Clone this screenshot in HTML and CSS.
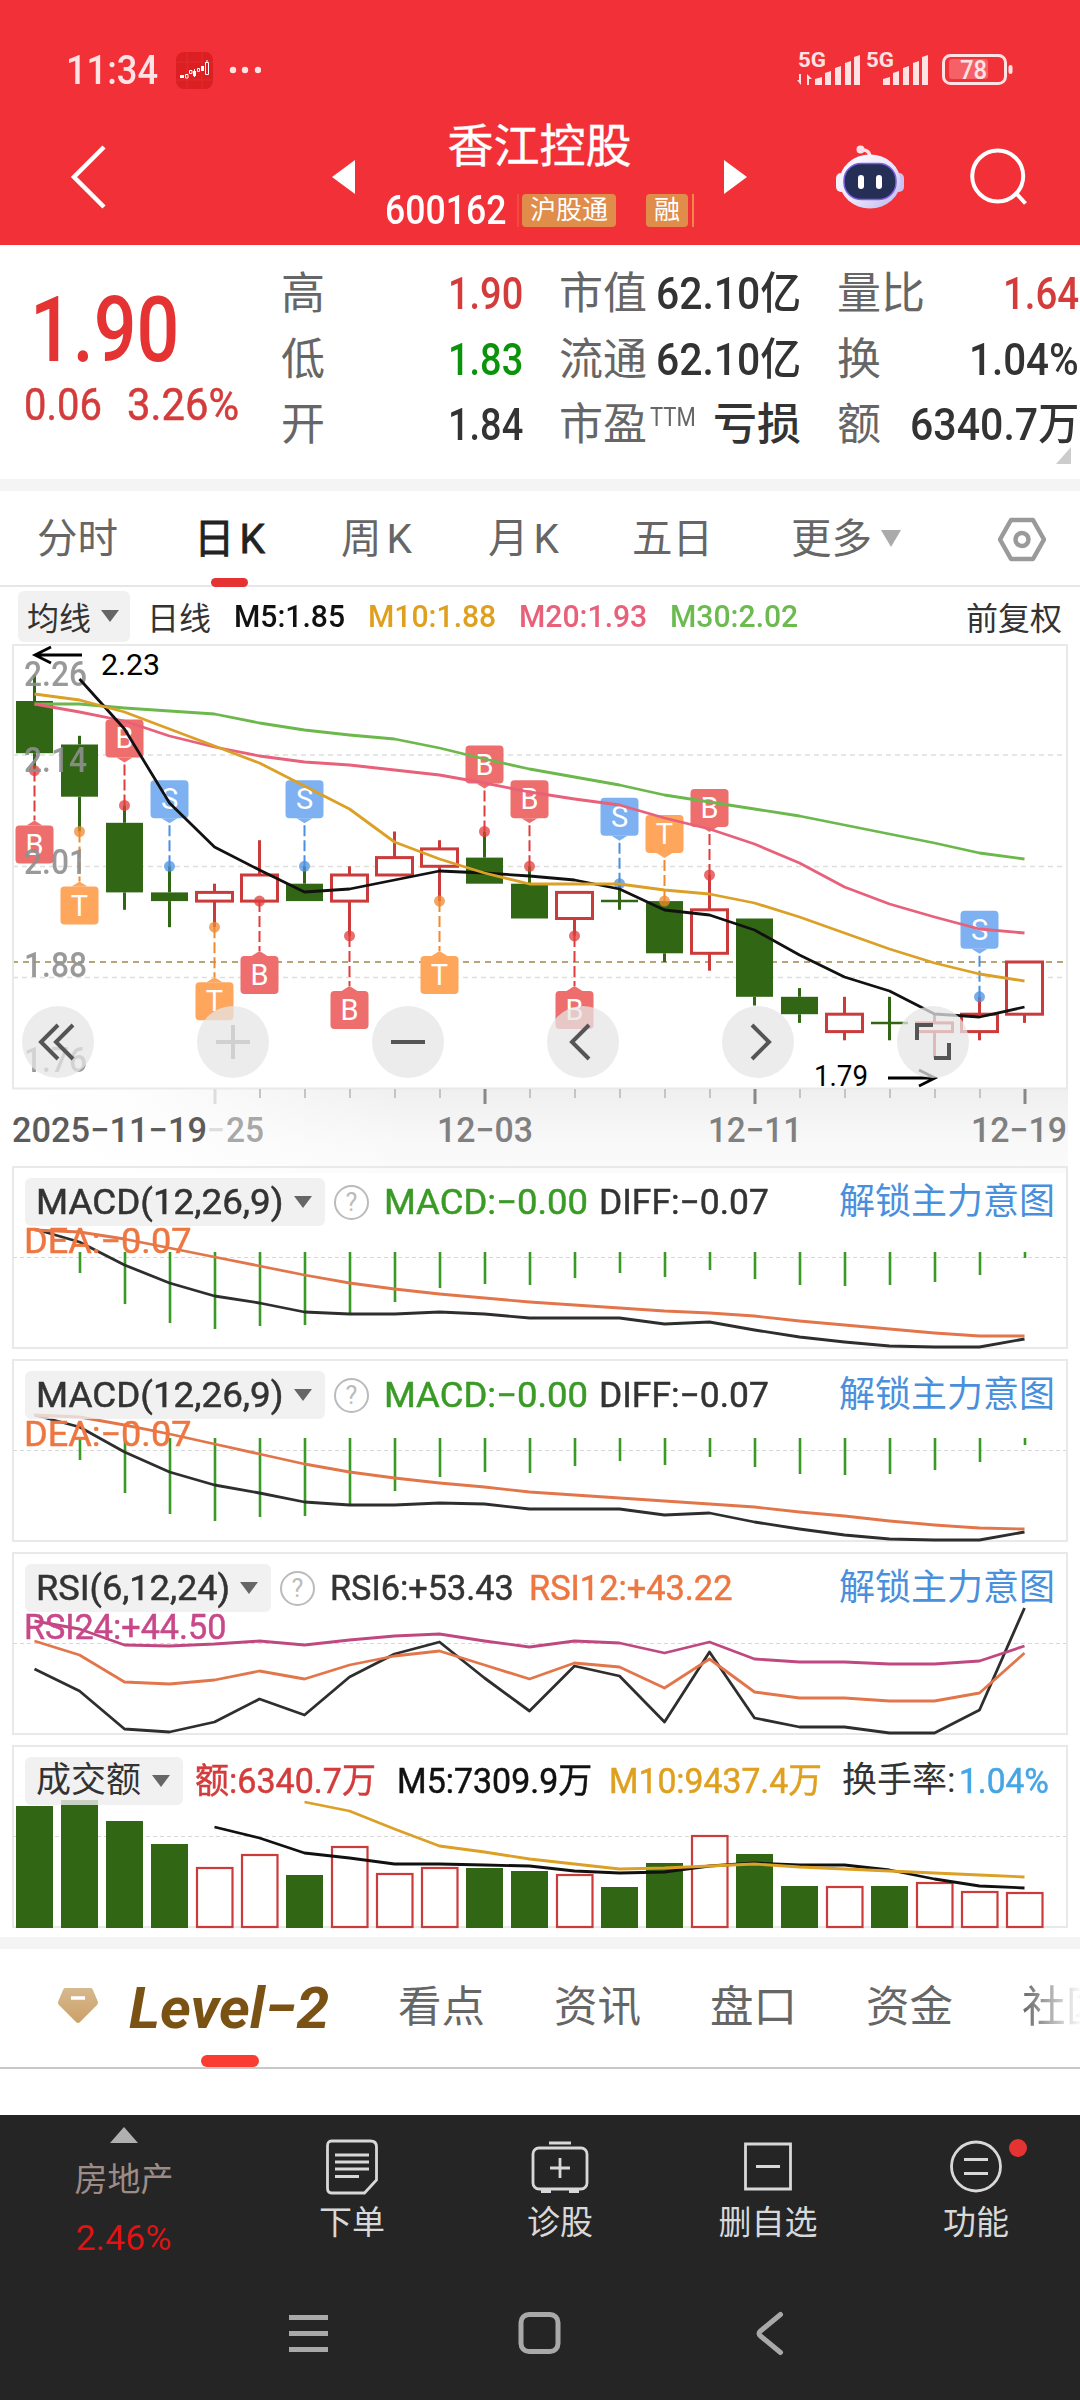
FILE: index.html
```html
<!DOCTYPE html>
<html lang="zh-CN">
<head>
<meta charset="utf-8">
<title>香江控股 600162</title>
<link rel="stylesheet" href="styles.css">
</head>
<body>
<header class="top">
  <div class="status">
    <span class="clock fit" data-w="92">11:34</span>
    <svg class="app" width="37" height="37" viewBox="0 0 37 37"><rect width="37" height="37" rx="8" fill="#dc1f22"/><path d="M11 0V37M26 0V37M0 10H37M0 28H37" stroke="#e02c2c" fill="none"/><path d="M4 23h4v3H4zM17 19h3v5h-3zM25 14h3v5h-3z" fill="#fff"/><path d="M9.500 22.500h2.500v3.500h-2.500zM13.500 18.500h2.500v3h-2.500zM21.500 16.500h2v3h-2zM29.500 10.500h3v12h-3zM18.500 17v8M31 8v3" stroke="#fff" fill="none"/></svg>
    <svg class="more" width="32" height="8" viewBox="0 0 32 8" fill="#ffe3e4"><circle cx="4" cy="4" r="3.200"/><circle cx="16" cy="4" r="3.200"/><circle cx="29" cy="4" r="3.200"/></svg>
    <svg class="signal" width="220" height="56" viewBox="796 42 220 56" fill="#ffe3e4">
      <text x="798" y="67" font-size="21" font-weight="700" textLength="28" lengthAdjust="spacingAndGlyphs">5G</text>
      <path d="M815 85V79l7-2v8zM825 85V73l6-2v14zM835 85V68l6-2v19zM845 85V63l6-2v24zM854 85V57l6-2v30z"/>
      <path d="M801 74v11l-4-5h2v-6zM807 85V74l5 5h-3v6z"/>
      <text x="866" y="67" font-size="21" font-weight="700" textLength="28" lengthAdjust="spacingAndGlyphs">5G</text>
      <path d="M883 85V79l7-2v8zM893 85V73l6-2v14zM903 85V68l6-2v19zM913 85V63l6-2v24zM922 85V57l6-2v30z"/>
      <rect x="943.500" y="55.500" width="62" height="28" rx="7" fill="none" stroke="#ffe3e4" stroke-width="3"/>
      <rect x="949" y="59" width="39" height="20" rx="3" opacity=".28"/>
      <rect x="1008.500" y="65" width="4" height="9" rx="2"/>
      <text x="960" y="79" font-size="25" font-weight="500" textLength="27" lengthAdjust="spacingAndGlyphs">78</text>
    </svg>
  </div>
  <div class="titlebar">
    <svg class="back" width="40" height="66" viewBox="69 144 40 66"><path d="M104 147L74 177l30 30" fill="none" stroke="#fff" stroke-width="4.500"/></svg>
    <i class="tri-left"></i>
    <div class="name">
      <h1>香江控股</h1>
      <div class="code"><span class="fit" data-w="121">600162</span><i class="sliver faint"></i><b>沪股通</b><b class="rong">融</b><i class="sliver"></i></div>
    </div>
    <i class="tri-right"></i>
    <svg class="robot" width="72" height="66" viewBox="834 142 72 66">
      <defs><linearGradient id="shell" x1="0" y1="0" x2="1" y2="1"><stop offset="0" stop-color="#fff"/><stop offset=".55" stop-color="#e9e4fa"/><stop offset="1" stop-color="#b9b4f0"/></linearGradient></defs>
      <path d="M861 148q9-1 9 8" fill="none" stroke="#fbdfe6" stroke-width="3.500"/><circle cx="860.500" cy="147.500" r="4" fill="#fbdfe6"/>
      <rect x="836" y="171" width="10" height="19" rx="5" fill="#f4eefc"/><rect x="894" y="171" width="10" height="19" rx="5" fill="#c9c2f4"/>
      <ellipse cx="870" cy="179.500" rx="30.500" ry="27" fill="url(#shell)"/>
      <rect x="844" y="161.500" width="52" height="36" rx="17" fill="#252e55" stroke="#7a5fe0" stroke-width="1.500"/>
      <rect x="858" y="173" width="6" height="14" rx="3" fill="#fff"/><rect x="876" y="173" width="6" height="14" rx="3" fill="#fff"/>
    </svg>
    <svg class="search" width="62" height="62" viewBox="968 146 62 62" fill="none" stroke="#fff" stroke-width="4"><circle cx="997.700" cy="176" r="25.500"/><path d="M1015 192l10.500 11.500"/></svg>
  </div>
</header>

<section class="quote">
  <div class="price">
    <strong class="fit" data-w="149">1.90</strong>
    <div><span class="fit" data-w="78">0.06</span><span class="fit" data-w="112">3.26%</span></div>
  </div>
  <dl class="stats s1">
    <div><dt>高</dt><dd class="fit up" data-w="75">1.90</dd></div>
    <div><dt>低</dt><dd class="fit down" data-w="75">1.83</dd></div>
    <div><dt>开</dt><dd class="fit" data-w="75">1.84</dd></div>
  </dl>
  <dl class="stats s2">
    <div><dt>市值</dt><dd class="fit" data-w="145">62.10亿</dd></div>
    <div><dt>流通</dt><dd class="fit" data-w="145">62.10亿</dd></div>
    <div><dt>市盈<sup class="fit" data-w="46">TTM</sup></dt><dd>亏损</dd></div>
  </dl>
  <dl class="stats s3">
    <div><dt>量比</dt><dd class="fit up" data-w="76">1.64</dd></div>
    <div><dt>换</dt><dd class="fit" data-w="110">1.04%</dd></div>
    <div><dt>额</dt><dd class="fit" data-w="169">6340.7万</dd></div>
  </dl>
  <i class="corner"></i>
</section>

<nav class="periods">
  <a>分时</a><a class="on">日<span>K</span></a><a>周<span>K</span></a><a>月<span>K</span></a><a>五日</a><a class="drop">更多<i></i></a>
  <svg width="48" height="46" viewBox="997 515 48 46" fill="none" stroke="#9a9a9a" stroke-width="4.500" stroke-linejoin="round"><path d="M1010 519h22l11 19.500-11 19.500h-22l-11-19.500z"/><circle cx="1021" cy="538.500" r="6.500"/></svg>
</nav>

<div class="averages">
  <span class="pill">均线<i></i></span>
  <span class="day">日线</span>
  <span class="fit m5" data-w="111">M5:1.85</span>
  <span class="fit m10" data-w="128">M10:1.88</span>
  <span class="fit m20" data-w="128">M20:1.93</span>
  <span class="fit m30" data-w="128">M30:2.02</span>
  <span class="adjust">前复权</span>
</div>

<div class="kline">
  <svg id="kline" width="1080" height="530" viewBox="0 643 1080 530"></svg>
  <div class="controls">
    <button><svg viewBox="0 0 72 72"><path d="M36 19L19 36l17 17M51 19L34 36l17 17"/></svg></button>
    <button class="off"><svg viewBox="0 0 72 72"><path d="M19 36h34M36 19v34"/></svg></button>
    <button><svg viewBox="0 0 72 72"><path d="M19 36h34"/></svg></button>
    <button><svg viewBox="0 0 72 72"><path d="M42 19L25 36l17 17"/></svg></button>
    <button><svg viewBox="0 0 72 72"><path d="M30 19l17 17-17 17"/></svg></button>
    <button><svg viewBox="0 0 72 72"><path d="M20 34V19h16M52 37v15H37"/></svg></button>
  </div>
</div>

<section class="panel">
  <svg id="macd1" width="1080" height="184" viewBox="0 -1 1080 184"></svg>
  <div class="legend"><span class="pill"><span class="fit" data-w="248">MACD(12,26,9)</span><i></i></span><em>?</em><span class="fit green" data-w="204">MACD:−0.00</span><span class="fit diff" data-w="170">DIFF:−0.07</span><a>解锁主力意图</a></div>
  <div class="second orange"><span class="fit" data-w="167">DEA:−0.07</span></div>
</section>
<section class="panel">
  <svg id="macd2" width="1080" height="184" viewBox="0 -1 1080 184"></svg>
  <div class="legend"><span class="pill"><span class="fit" data-w="248">MACD(12,26,9)</span><i></i></span><em>?</em><span class="fit green" data-w="204">MACD:−0.00</span><span class="fit diff" data-w="170">DIFF:−0.07</span><a>解锁主力意图</a></div>
  <div class="second orange"><span class="fit" data-w="167">DEA:−0.07</span></div>
</section>
<section class="panel">
  <svg id="rsi" width="1080" height="184" viewBox="0 -1 1080 184"></svg>
  <div class="legend"><span class="pill"><span class="fit" data-w="194">RSI(6,12,24)</span><i></i></span><em>?</em><span class="fit" data-w="184">RSI6:+53.43</span><span class="fit orange rsi12" data-w="203">RSI12:+43.22</span><a>解锁主力意图</a></div>
  <div class="second purple"><span class="fit" data-w="202">RSI24:+44.50</span></div>
</section>
<section class="panel volume">
  <svg id="volume" width="1080" height="184" viewBox="0 -1 1080 184"></svg>
  <div class="legend"><span class="pill">成交额<i></i></span><span class="fit up" data-w="181">额:6340.7万</span><span class="fit m5" data-w="195">M5:7309.9万</span><span class="fit m10" data-w="213">M10:9437.4万</span><span class="turn">换手率:<b class="fit" data-w="90">1.04%</b></span></div>
</section>

<nav class="info">
  <svg class="gem" width="52" height="52" viewBox="52 1984 52 52"><defs><linearGradient id="gold" x1="0" y1="0" x2="0" y2="1"><stop offset="0" stop-color="#d6b98f"/><stop offset="1" stop-color="#cda066"/></linearGradient></defs><path d="M65 1990h26q1 0 2 2l5 12q0 2-1 3l-17 17q-2 2-4 0l-17-17q-1-1-1-3l5-12q1-2 2-2z" fill="url(#gold)"/><path d="M71 2000h14" stroke="#fff" stroke-width="3.500"/></svg>
  <a class="level"><span class="fit" data-w="200">Level−2</span></a>
  <a>看点</a><a>资讯</a><a>盘口</a><a>资金</a><a class="cut">社区</a>
</nav>
<div class="blank"></div>

<footer>
  <div class="actions">
    <div class="sector"><i></i><span>房地产</span><b class="fit" data-w="96">2.46%</b></div>
    <div class="act"><svg viewBox="0 0 64 58"><path d="M13 3h39q6 0 6 6v33l-12 13H13q-4 0-4-5V8q0-5 4-5z" transform="translate(-1.500 0)"/><path d="M15 17h34M15 24h34M15 31h34M15 38.500h24"/></svg>下单</div>
    <div class="act"><svg viewBox="0 0 64 58"><rect x="5" y="10" width="54" height="41" rx="6"/><path d="M21 5h22M32 20v20M22 30h20M13 53.500h10M41 53.500h10"/></svg>诊股</div>
    <div class="act"><svg viewBox="0 0 64 58"><path d="M9.500 6h45v45h-45zM20 28.500h24"/></svg>删自选</div>
    <div class="act"><svg viewBox="0 0 64 58"><circle cx="32" cy="28.500" r="24.500"/><path d="M20 21.500h24M20 35.500h24"/></svg>功能<i class="dot"></i></div>
  </div>
  <svg class="system" width="1080" height="60" viewBox="0 2303 1080 60" fill="none" stroke="#a9a9a9" stroke-width="5"><path d="M289 2317.500h39M289 2333.500h39M289 2349.500h39"/><rect x="521" y="2314.500" width="37" height="37" rx="8"/><path d="M780.500 2314.500l-20 16.500q-3 2.500 0 5l20 16.500" stroke-linecap="round"/></svg>
</footer>
<script src="charts.js"></script>
</body>
</html>
```
FILE: styles.css
```css
* { box-sizing: border-box; margin: 0; padding: 0; }
body { width: 1080px; height: 2400px; overflow: hidden; background: #fff; color: #333; font-family: Roboto, "Noto Sans CJK SC", sans-serif; }
svg { display: block; flex: none; }
svg text { font-family: Roboto, "Noto Sans CJK SC", sans-serif; }
i, em { font-style: normal; display: block; }
.fit { display: inline-block; white-space: nowrap; flex: none; }
.fit > span { display: inline-block; transform-origin: 0 50%; }

.top { height: 245px; background: #f23038; color: #fff; }
.status { height: 112px; padding: 28px 66px 0 66px; display: flex; align-items: center; }
.clock { font-size: 41px; font-weight: 500; color: #ffe3e4; }
.app { margin-left: 18px; }
.more { margin-left: 16px; }
.signal { margin-left: auto; margin-right: -2px; }
.titlebar { height: 133px; display: flex; align-items: center; }
.back { margin: -4px 0 0 69px; }
.tri-left, .tri-right { border: 17px solid transparent; border-left-width: 0; border-right: 23px solid #fff; margin: -3px 0 0 223px; }
.tri-right { border-right-width: 0; border-left: 23px solid #fff; margin-left: 0; }
.name { width: 369px; align-self: stretch; padding-top: 4px; text-align: center; }
.name h1 { font-size: 46px; font-weight: 400; line-height: 60px; color: #fff; -webkit-text-stroke: .4px #fff; }
.code { display: flex; align-items: center; padding-left: 30px; height: 69px; line-height: 60px; font-size: 40px; font-weight: 500; }
.code b { width: 94px; height: 33px; border-radius: 4px; background: #e08c4a; font-weight: 400; font-size: 26px; line-height: 32px; margin-left: 3px; }
.code .rong { width: 42px; margin-left: 30px; }
.sliver { width: 2px; height: 33px; background: #ef8a4a; margin-left: 4px; }
.faint { opacity: .3; margin-left: 11px; }
.robot { margin: -4px 0 0 87px; }
.search { margin: -3px 0 0 62px; }

.quote { position: relative; height: 246px; border-bottom: 12px solid #f4f4f4; display: flex; padding-top: 16px; font-size: 44px; }
.price { width: 281px; color: #e53333; }
.price strong { font-size: 90px; line-height: 112px; margin: 14px 0 0 30px; font-weight: 500; display: block; }
.price div { display: flex; gap: 25px; padding-left: 24px; color: #d43b3b; line-height: 36px; -webkit-text-stroke: .5px #d43b3b; }
.stats { width: 242px; margin-right: 36px; }
.stats.s2, .stats.s3 { width: 242px; }
.stats.s3 { margin-right: 0; }
.stats > div { height: 65.500px; line-height: 66px; display: flex; justify-content: space-between; white-space: nowrap; }
.stats dt { color: #666; display: flex; }
.stats dd { font-weight: 500; }
.stats sup { font-size: 25px; line-height: 52px; margin-left: 3px; }
.up { color: #d43b3b; }
.down { color: #0b940b; }
.corner { position: absolute; right: 9px; bottom: 15px; border-left: 15px solid transparent; border-bottom: 17px solid #ccc; }

.periods { height: 96px; border-bottom: 2px solid #e6e6e6; display: grid; grid-template-columns: 157px 147px 147px 144px 159px 206px 48px; padding-left: 37px; align-items: center; font-size: 40.500px; color: #666; }
.periods a { position: relative; display: flex; line-height: 96px; }
.periods a span { margin-left: 5px; }
.periods .on { color: #222; -webkit-text-stroke: .8px #222; }
.periods .on::after { content: ""; position: absolute; left: 17px; bottom: 0; width: 37px; height: 9px; border-radius: 5px; background: #e53333; }
.drop i { border: 10px solid transparent; border-top: 17px solid #aaa; border-bottom: 0; margin: 39px 0 0 9px; }
.periods svg { margin-left: 1px; }

.averages { height: 56px; padding: 4px 18px 2px; display: flex; align-items: center; font-size: 32px; }
.pill { display: flex; align-items: center; background: rgba(238, 238, 238, .8); border-radius: 6px; }
.pill i { border: 9px solid transparent; border-top: 12px solid #666; border-bottom: 0; margin-left: 10px; }
.averages .pill { width: 112px; height: 51px; padding-left: 9px; }
.day { margin: 0 23px 0 17px; }
.averages .fit { margin-right: 23px; font-weight: 500; }
.m5 { color: #111; }
.m10 { color: #dfa020; }
.m20 { color: #e8607a; }
.m30 { color: #6cbb50; }
.adjust { margin-left: auto; }

.kline { position: relative; height: 524px; }
.controls { position: absolute; left: 22px; top: 363px; display: flex; gap: 103px; }
.controls button { width: 72px; height: 72px; border: 0; border-radius: 50%; background: rgba(230, 230, 230, .75); }
.controls svg { width: 72px; height: 72px; fill: none; stroke: #555; stroke-width: 4; }
.controls .off svg { stroke: #d0d0d0; }

.panel { position: relative; height: 193px; font-size: 35px; }
.panel > svg { position: absolute; left: 0; top: -1px; }
.legend { position: relative; display: flex; align-items: center; height: 60px; padding: 11px 0 1px 25px; line-height: 48px; }
.legend .fit { padding-top: 2px; -webkit-text-stroke: .5px currentColor; }
.legend .pill { height: 48px; padding: 0 13px 0 11px; }
.legend em { width: 35px; height: 35px; border: 2.500px solid #bbb; border-radius: 50%; margin: 0 15px 0 9px; font-size: 25px; line-height: 31px; text-align: center; color: #bbb; }
.legend a { margin-left: auto; margin-right: 25px; font-size: 36px; line-height: 50px; color: #4a8fdc; }
.green { color: #3a9a26; }
.diff { margin-left: 11px; }
.rsi12 { margin-left: 15px; }
.orange { color: #ee7640; }
.purple { color: #c8488a; }
.second { position: relative; padding-left: 24px; line-height: 36px; margin-top: -3px; -webkit-text-stroke: .5px currentColor; }
.volume { height: 191px; }
.volume .pill i { margin-left: 11px; }
.volume .pill + .fit { margin-left: 12px; margin-right: 21px; }
.volume .m10 { margin-left: 17px; }
.turn { margin-left: 20px; display: flex; line-height: 50px; }
.turn b { font-weight: 400; color: #45a5e5; margin-left: 3px; line-height: 48px; }

.info { height: 132px; border-top: 12px solid #f4f4f4; border-bottom: 2px solid #c8c8c8; display: flex; align-items: center; padding-left: 52px; font-size: 43.500px; color: #666; position: relative; white-space: nowrap; overflow: hidden; }
.info a { margin-left: 69px; flex: none; line-height: 120px; }
.info .level { position: relative; margin-left: 25px; color: #7a5214; font-size: 58px; line-height: 118px; font-weight: 700; font-style: italic; }
.info .level::after { content: ""; position: absolute; left: 72px; bottom: 0; width: 58px; height: 12px; border-radius: 6px; background: #fa3c32; }
.info .cut { -webkit-mask-image: linear-gradient(90deg, #000 0, transparent 60px); mask-image: linear-gradient(90deg, #000 0, transparent 60px); }
.blank { height: 46px; }

footer { height: 285px; background: #252525; color: #d8d8d8; font-size: 33px; }
.actions { display: grid; grid-template-columns: 248px repeat(4, 208px); height: 188px; }
.sector { display: flex; flex-direction: column; align-items: center; color: #9d8c86; }
.sector i { border: 14px solid transparent; border-bottom: 16px solid #b0b0b0; border-top: 0; margin: 12px 0 16px; }
.sector b { font-weight: 400; color: #e01414; font-size: 35px; margin-top: 18px; line-height: 42px; }
.sector span { line-height: 41px; }
.act { position: relative; display: flex; flex-direction: column; align-items: center; padding-top: 23px; line-height: 53px; }
.act svg { width: 64px; height: 58px; fill: none; stroke: #d8d8d8; stroke-width: 2.800; }
.dot { position: absolute; left: 137px; top: 24px; width: 18px; height: 18px; border-radius: 50%; background: #e53333; }
```
FILE: charts.js
```js
// Squeeze or stretch number runs to the column width given in data-w.
document.querySelectorAll('.fit').forEach(function (el) {
  var inner = document.createElement('span');
  while (el.firstChild) inner.appendChild(el.firstChild);
  el.appendChild(inner);
  var natural = inner.offsetWidth, w = +el.dataset.w;
  el.style.width = w + 'px';
  inner.style.transform = 'scaleX(' + w / natural + ')';
});

var GREEN = '#306614', RED = '#cc3b3b', BLACK = '#111', GOLD = '#dba025', PINK = '#e8607a', LIME = '#6cb84c';
var N = 23;
function X(i) { return 34.5 + 45 * i; }
function Y(p) { return 962 + (1.9 - p) * 870; }
function line(x1, y1, x2, y2, c, w, extra) {
  return '<line x1="' + x1 + '" y1="' + y1 + '" x2="' + x2 + '" y2="' + y2 + '" stroke="' + c + '" stroke-width="' + w + '" ' + (extra || '') + '/>';
}
function rect(x, y, w, h, attrs) {
  return '<rect x="' + x + '" y="' + y + '" width="' + w + '" height="' + h + '" ' + attrs + '/>';
}
function poly(values, start, c, w) {
  return '<polyline fill="none" stroke-linejoin="round" stroke="' + c + '" stroke-width="' + (w || 2.8) + '" points="' +
    values.map(function (v, k) { return X(k + start) + ',' + v; }).join(' ') + '"/>';
}
function text(s, x, y, w, size, c, extra) {
  return '<text x="' + x + '" y="' + y + '" textLength="' + w + '" lengthAdjust="spacingAndGlyphs" font-size="' + size + '" fill="' + c + '" ' + (extra || '') + '>' + s + '</text>';
}

// [open, high, low, close]
var days = [
  [2.20, 2.23, 2.12, 2.14], [2.15, 2.16, 2.05, 2.09], [2.06, 2.08, 1.96, 1.98], [1.98, 2.01, 1.94, 1.97],
  [1.97, 1.99, 1.94, 1.98], [1.97, 2.04, 1.97, 2.00], [1.99, 2.01, 1.97, 1.97], [1.97, 2.01, 1.93, 2.00],
  [2.00, 2.05, 2.00, 2.02], [2.01, 2.04, 1.97, 2.03], [2.02, 2.05, 1.99, 1.99], [1.99, 2.01, 1.95, 1.95],
  [1.95, 1.98, 1.93, 1.98], [1.97, 1.99, 1.96, 1.97], [1.97, 1.97, 1.90, 1.91], [1.91, 2.00, 1.89, 1.96],
  [1.95, 1.95, 1.85, 1.86], [1.86, 1.87, 1.83, 1.84], [1.82, 1.86, 1.81, 1.84], [1.83, 1.86, 1.81, 1.83],
  [1.82, 1.84, 1.79, 1.83], [1.82, 1.86, 1.81, 1.84], [1.84, 1.90, 1.83, 1.90]
];
// [day, letter, -1 above / 1 below]
var marks = [[0, 'B', 1], [1, 'T', 1], [2, 'B', -1], [3, 'S', -1], [4, 'T', 1], [5, 'B', 1], [6, 'S', -1], [7, 'B', 1],
  [9, 'T', 1], [10, 'B', -1], [11, 'B', -1], [12, 'B', 1], [13, 'S', -1], [14, 'T', -1], [15, 'B', -1], [21, 'S', -1]];
var tint = { B: ['#ee6d6d', '#e03c3c'], S: ['#7db1f1', '#4a90e0'], T: ['#fda65c', '#f08a30'] };

function kline() {
  var s = '<defs><linearGradient id="ax" x1="0" y1="0" x2="0" y2="1"><stop offset="0" stop-color="#efefef"/><stop offset=".6" stop-color="#f8f8f8"/><stop offset="1" stop-color="#fbfbfb"/></linearGradient>' +
    '<linearGradient id="fade" x1="0" y1="0" x2="1" y2="0"><stop offset="0" stop-color="#fff"/><stop offset=".3" stop-color="#fff" stop-opacity=".9"/><stop offset="1" stop-color="#fff" stop-opacity="0"/></linearGradient></defs>';
  s += rect(13, 1089, 1055, 84, 'fill="url(#ax)"') + rect(12, 1089, 400, 84, 'fill="url(#fade)"');
  [755, 866.5, 977.5].forEach(function (y) { s += line(13, y, 1066, y, '#dedede', 1.3, 'stroke-dasharray="5 4"'); });
  s += line(12, 962, 1066, 962, '#b9a478', 1.8, 'stroke-dasharray="6 5"');
  s += rect(13, 645, 1054, 443.5, 'fill="none" stroke="#e9e9e9" stroke-width="2"');
  days.forEach(function (d, i) {
    var up = d[3] > d[0], c = up ? RED : GREEN, top = Y(Math.max(d[0], d[3])), bot = Y(Math.min(d[0], d[3])), x = X(i);
    s += line(x, Y(d[1]), x, top, c, 3) + line(x, bot, x, Y(d[2]), c, 3);
    if (d[0] === d[3]) s += line(x - 18.5, top, x + 18.5, top, c, 2.5);
    else if (up) s += rect(x - 18, top, 36, bot - top, 'fill="#fff" stroke="' + c + '" stroke-width="3"');
    else s += rect(x - 18.5, top, 37, bot - top, 'fill="' + c + '"');
  });
  marks.forEach(function (m) {
    var d = days[m[0]], x = X(m[0]), y = Y(m[2] < 0 ? d[1] : d[2]), t = tint[m[1]];
    var by = m[2] < 0 ? y - 86 : y + 55, tip = m[2] < 0 ? by + 43 : by - 5, base = m[2] < 0 ? by + 38 : by;
    s += line(x, y, x, tip, t[1], 2, 'stroke-dasharray="11 4"');
    s += '<circle cx="' + x + '" cy="' + y + '" r="5.5" fill="' + t[1] + '" opacity=".75"/>';
    s += '<path d="M' + (x - 8) + ' ' + base + 'H' + (x + 8) + 'L' + x + ' ' + tip + 'z" fill="' + t[0] + '"/>';
    s += rect(x - 19, by, 38, 38, 'rx="4" fill="' + t[0] + '"');
    s += '<text x="' + x + '" y="' + (by + 29) + '" text-anchor="middle" font-size="29" fill="#fff">' + m[1] + '</text>';
  });
  [['2.26', 686], ['2.14', 772], ['2.01', 874], ['1.88', 977], ['1.76', 1071.5]].forEach(function (l) {
    s += text(l[0], 24, l[1], 63, 35, '#8f8f8f', 'opacity=".9" font-weight="500"');
  });
  s += poly([704, 704, 708, 711, 714, 723, 730, 735, 739, 748, 759, 769, 777, 785, 795, 802, 809, 816, 825, 834, 843, 853, 859], 0, LIME);
  s += poly([704, 712, 721, 736, 747, 756, 762, 765, 770, 775, 783, 792, 799, 805, 818, 829, 844, 863, 887, 904, 917, 929, 933], 0, PINK);
  s += poly([679, 729, 803, 847, 870, 892, 889, 880, 871, 873, 876, 880, 889, 910, 915, 930, 955, 977, 991, 1014, 1017, 1007], 1, BLACK);
  s += poly([694, 700, 712, 729, 746, 763, 786, 809, 842, 859, 873, 884, 884, 884, 890, 894, 903, 917, 933, 949, 963, 974, 981], 0, GOLD);
  s += '<path d="M82 655H35M51 647L35 655l16 8M888 1078h47M919 1070l16 8-16 8" fill="none" stroke="#000" stroke-width="2.8"/>';
  s += text('2.23', 101, 675, 59, 30, '#000') + text('1.79', 814, 1086, 54, 30, '#000');
  for (var i = 4; i < N; i++) {
    var big = (i - 4) % 6 === 0;
    s += line(X(i) + .5, 1089, X(i) + .5, big ? 1104 : 1098, i === 4 ? '#ddd' : big ? '#888' : '#c4c4c4', big ? 3 : 2);
  }
  var bold = 'font-weight="500"';
  s += text('2025−11−19', 12, 1142, 195, 35, '#5c5c5c', bold) + text('−', 207, 1142, 18, 35, '#dedede', bold) + text('25', 226, 1142, 38, 35, '#a8a8a8', bold);
  s += text('12−03', 437, 1142, 96, 35, '#808080', bold) + text('12−11', 708, 1142, 94, 35, '#808080', bold) + text('12−19', 971, 1142, 96, 35, '#808080', bold);
  document.getElementById('kline').innerHTML = s;
}

function frame() {
  return rect(13, 0, 1054, 181, 'fill="none" stroke="#e9e9e9" stroke-width="2"') + line(13, 90.5, 1066, 90.5, '#d8d8d8', 1.2, 'stroke-dasharray="4 3"');
}
function macd(id, top, bars, diff, dea) {
  var s = frame();
  bars.forEach(function (b, k) { s += line(X(k + 1) + .5, top, X(k + 1) + .5, b, '#3a9a26', 2.6); });
  document.getElementById(id).innerHTML = s + poly(diff, 0, '#2e2e2e') + poly(dea, 0, '#e2764a');
}

kline();
macd('macd1', 85,
  [106, 137, 156, 162, 159, 158, 146, 135, 121, 117, 118, 111, 106, 110, 103, 112, 118, 119, 118, 115, 108, 91],
  [62, 75, 98, 116, 129, 136, 145, 147, 147, 145, 147, 151, 151, 151, 157, 155, 163, 170, 175, 179, 180, 180, 172],
  [63, 65, 72, 81, 90, 99, 108, 116, 122, 127, 131, 135, 138, 141, 144, 146, 149, 154, 158, 162, 166, 169, 169]);
macd('macd2', 78,
  [100, 133, 154, 161, 157, 156, 145, 131, 117, 112, 113, 106, 101, 105, 97, 107, 114, 115, 114, 110, 102, 85],
  [55, 67, 92, 112, 125, 133, 142, 145, 145, 143, 144, 149, 149, 149, 155, 153, 162, 169, 175, 179, 180, 180, 172],
  [55, 57, 65, 74, 84, 94, 104, 112, 118, 123, 127, 132, 135, 138, 141, 144, 147, 152, 156, 161, 165, 168, 169]);
document.getElementById('rsi').innerHTML = frame() +
  poly([116, 138, 176, 179, 169, 146, 162, 124, 101, 89, 125, 158, 113, 123, 169, 99, 165, 174, 174, 180, 180, 157, 55], 0, '#2e2e2e') +
  poly([88, 102, 129, 131, 127, 118, 126, 112, 103, 98, 112, 126, 110, 114, 135, 106, 139, 145, 145, 148, 148, 140, 100], 0, '#e2764a') +
  poly([68, 76, 92, 93, 91, 88, 92, 87, 83, 81, 88, 94, 88, 90, 100, 89, 106, 109, 109, 111, 111, 108, 93], 0, '#c04880');

var vol = frame();
[60, 54, 75, 98, 121, 108, 129, 100, 127, 121, 122, 125, 128, 141, 117, 89, 108, 140, 140, 140, 136, 145, 146].forEach(function (v, i) {
  vol += days[i][3] > days[i][0]
    ? rect(X(i) - 17.5, v + 1, 35.5, 180 - v, 'fill="#fff" stroke="' + RED + '" stroke-width="2.2"')
    : rect(X(i) - 18.5, v, 37, 182 - v, 'fill="' + GREEN + '"');
});
vol += poly([81, 92, 107, 112, 118, 118, 119, 120, 125, 127, 126, 120, 117, 119, 119, 124, 133, 140, 142], 4, BLACK);
vol += poly([56, 65, 83, 100, 106, 113, 118, 123, 122, 120, 118, 121, 123, 125, 127, 129, 131], 6, GOLD);
document.getElementById('volume').innerHTML = vol;
```
